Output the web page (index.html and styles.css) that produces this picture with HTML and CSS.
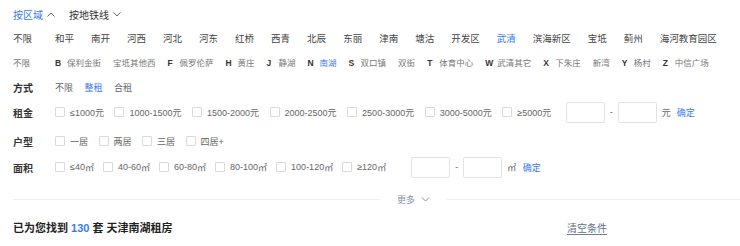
FILE: index.html
```html
<!DOCTYPE html>
<html lang="zh-CN">
<head>
  <meta charset="UTF-8">
  <meta name="viewport" content="width=device-width, initial-scale=1.0">
  <title>天津南湖租房</title>
  <link rel="stylesheet" href="styles.css">
</head>
<body>
  <div class="filter">
    <div class="tabs">
      <span class="tab active">按区域
        <svg class="caret" viewBox="0 0 8 5"><path d="M0.5 4.5 L4 1 L7.5 4.5"/></svg>
      </span>
      <span class="tab">按地铁线
        <svg class="caret" viewBox="0 0 8 5"><path d="M0.5 0.5 L4 4 L7.5 0.5"/></svg>
      </span>
    </div>

    <div class="row area">
      <span class="label plain">不限</span>
      <div class="options">
        <a>和平</a><a>南开</a><a>河西</a><a>河北</a><a>河东</a><a>红桥</a><a>西青</a><a>北辰</a><a>东丽</a><a>津南</a><a>塘沽</a><a>开发区</a><a class="on">武清</a><a>滨海新区</a><a>宝坻</a><a>蓟州</a><a>海河教育园区</a>
      </div>
    </div>

    <div class="row sub">
      <span class="label plain">不限</span>
      <div class="options">
        <a><b>B</b>保利金街</a><a>宝坻其他西</a><a><b>F</b>佩罗伦萨</a><a><b>H</b>黄庄</a><a><b>J</b>静湖</a><a class="on"><b>N</b>南湖</a><a><b>S</b>双口镇</a><a>双街</a><a><b>T</b>体育中心</a><a><b>W</b>武清其它</a><a><b>X</b>下朱庄</a><a>新湾</a><a><b>Y</b>杨村</a><a><b>Z</b>中信广场</a>
      </div>
    </div>

    <div class="row way">
      <span class="label">方式</span>
      <div class="options">
        <a>不限</a><a class="on">整租</a><a>合租</a>
      </div>
    </div>

    <div class="row price">
      <span class="label">租金</span>
      <div class="options">
        <label class="check"><span class="box"></span>≤1000元</label>
        <label class="check"><span class="box"></span>1000-1500元</label>
        <label class="check"><span class="box"></span>1500-2000元</label>
        <label class="check"><span class="box"></span>2000-2500元</label>
        <label class="check"><span class="box"></span>2500-3000元</label>
        <label class="check"><span class="box"></span>3000-5000元</label>
        <label class="check"><span class="box"></span>≥5000元</label>
        <div class="range">
          <input type="text"><span>-</span><input type="text"><span>元</span><a class="ok">确定</a>
        </div>
      </div>
    </div>

    <div class="row layout">
      <span class="label">户型</span>
      <div class="options">
        <label class="check"><span class="box"></span>一居</label>
        <label class="check"><span class="box"></span>两居</label>
        <label class="check"><span class="box"></span>三居</label>
        <label class="check"><span class="box"></span>四居+</label>
      </div>
    </div>

    <div class="row size">
      <span class="label">面积</span>
      <div class="options">
        <label class="check"><span class="box"></span>≤40<span class="sq">㎡</span></label>
        <label class="check"><span class="box"></span>40-60<span class="sq">㎡</span></label>
        <label class="check"><span class="box"></span>60-80<span class="sq">㎡</span></label>
        <label class="check"><span class="box"></span>80-100<span class="sq">㎡</span></label>
        <label class="check"><span class="box"></span>100-120<span class="sq">㎡</span></label>
        <label class="check"><span class="box"></span>≥120<span class="sq">㎡</span></label>
        <div class="range wide">
          <input type="text"><span>-</span><input type="text"><span class="sq">㎡</span><a class="ok">确定</a>
        </div>
      </div>
    </div>

    <div class="more">
      <span class="more-btn">更多
        <svg class="caret" viewBox="0 0 8 5"><path d="M0.5 0.5 L4 4 L7.5 0.5"/></svg>
      </span>
    </div>

    <div class="result">
      <h2 class="found">已为您找到 <em>130</em> 套 天津南湖租房</h2>
      <a class="clear">清空条件</a>
    </div>
  </div>
</body>
</html>
```

FILE: styles.css
```css
body {
  margin: 0;
  padding: 0;
  font-family: "Liberation Sans", "Noto Sans CJK SC", sans-serif;
  color: #333;
  background: #fff;
}
.filter {
  padding: 0 13px 12px;
}
a {
  cursor: pointer;
}

/* tabs */
.tabs {
  height: 28px;
  display: flex;
  align-items: center;
  gap: 14px;
  font-size: 10px;
}
.tab {
  display: flex;
  align-items: center;
  gap: 4px;
  color: #333;
}
.tab.active {
  color: #3a78f2;
}
.caret {
  width: 8px;
  height: 5px;
  fill: none;
  stroke: #666;
  stroke-width: 1;
}

/* rows */
.row {
  display: flex;
  align-items: center;
}
.label {
  width: 42px;
  flex-shrink: 0;
  font-size: 10px;
  font-weight: bold;
  color: #333;
}
.label.plain {
  font-weight: normal;
}
.options {
  display: flex;
  align-items: center;
}
.options .on {
  color: #3a78f2;
}

.area {
  height: 20px;
}
.area .label {
  font-size: 9.5px;
  color: #444;
}
.area .options {
  gap: 17px;
  font-size: 9.5px;
  color: #444;
}

.sub {
  height: 28px;
}
.sub .label {
  font-size: 8.5px;
  color: #777;
}
.sub .options {
  gap: 12px;
  font-size: 8.5px;
  color: #777;
}
.sub b {
  display: inline-block;
  width: 9px;
  margin-right: 3px;
  color: #333;
}

.way {
  height: 22px;
}
.way .options {
  gap: 11.5px;
  font-size: 9px;
  color: #666;
}

.price {
  height: 28px;
}
.layout {
  height: 30px;
}
.size {
  height: 22px;
}

.check {
  display: flex;
  align-items: center;
  margin-right: 10.5px;
  font-size: 9px;
  color: #666;
}
.box {
  width: 8px;
  height: 8px;
  border: 1px solid #d9d9d9;
  border-radius: 1px;
  margin-right: 5px;
}
.sq {
  letter-spacing: -1.5px;
}

.range {
  display: flex;
  align-items: center;
  gap: 5px;
  margin-left: 4px;
  font-size: 9px;
  color: #666;
}
.range.wide {
  margin-left: 16px;
}
.range input {
  width: 37px;
  height: 19px;
  padding: 0;
  border: 1px solid #e2e2e2;
  border-radius: 2px;
  outline: none;
}
.range .sq {
  margin-right: 2px;
}
.range .ok {
  margin-left: 1px;
  color: #3a78f2;
  font-size: 9px;
}

/* more */
.more {
  height: 43px;
  margin-right: -13px;
  display: flex;
  align-items: center;
}
.more::before,
.more::after {
  content: "";
  flex: 1;
  border-top: 1px solid #eceef1;
}
.more::before {
  flex: 0 0 367px;
}
.more-btn {
  display: flex;
  align-items: center;
  gap: 6px;
  padding: 0 17px;
  font-size: 9px;
  color: #8492a8;
}
.more-btn .caret {
  width: 9px;
  stroke: #8492a8;
}

/* result */
.result {
  display: flex;
  align-items: center;
  height: 12px;
}
.found {
  margin: 0;
  width: 554px;
  font-size: 11px;
  font-weight: bold;
  color: #222;
}
.found em {
  font-style: normal;
  color: #3a78f2;
}
.clear {
  display: block;
  margin-top: 3px;
  font-size: 10px;
  line-height: 11px;
  color: #5f6f8c;
  border-bottom: 1px solid #6f7f99;
}
```
